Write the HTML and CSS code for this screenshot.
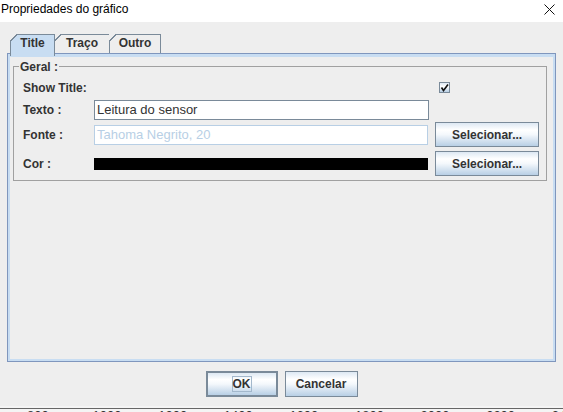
FILE: index.html
```html
<!DOCTYPE html>
<html>
<head>
<meta charset="utf-8">
<link rel="stylesheet" href="styles.css">
</head>
<body>
<div class="window">
  <div class="titlebar">
    <span class="title">Propriedades do gráfico</span>
    <svg class="close" width="11" height="11" viewBox="0 0 11 11"><path d="M0.5 0.5 L10.5 10.5 M10.5 0.5 L0.5 10.5" stroke="#111" stroke-width="1" fill="none"/></svg>
  </div>
  <div class="dialog">
    <div class="tabs">
      <div class="tab selected tab-title">Title</div>
      <div class="tab tab-traco">Traço</div>
      <div class="tab tab-outro">Outro</div>
    </div>
    <div class="panel">
      <div class="group">
        <span class="legend">Geral :</span>
        <div class="row r1">
          <span class="label">Show Title:</span>
          <span class="check"><svg width="9" height="9" viewBox="0 0 9 9"><path d="M1.5 4.5 L3.5 7.5 L8 1.5" stroke="#111" stroke-width="1.6" fill="none"/></svg></span>
        </div>
        <div class="row r2">
          <span class="label">Texto :</span>
          <span class="field">Leitura do sensor</span>
        </div>
        <div class="row r3">
          <span class="label">Fonte :</span>
          <span class="field disabled">Tahoma Negrito, 20</span>
          <span class="btn select">Selecionar...</span>
        </div>
        <div class="row r4">
          <span class="label">Cor :</span>
          <span class="swatch"></span>
          <span class="btn select">Selecionar...</span>
        </div>
      </div>
    </div>
    <div class="actions">
      <span class="btn default ok"><span class="focus">OK</span></span>
      <span class="btn cancel">Cancelar</span>
    </div>
  </div>
  <div class="behind">
    <span class="tick">800</span>
    <span class="tick">1000</span>
    <span class="tick">1200</span>
    <span class="tick">1400</span>
    <span class="tick">1600</span>
    <span class="tick">1800</span>
    <span class="tick">2000</span>
    <span class="tick">2200</span>
    <span class="tick">2400</span>
  </div>
</div>
</body>
</html>
```
FILE: styles.css
```css
* { box-sizing: border-box; }
html, body { margin: 0; padding: 0; }
body {
  width: 563px;
  height: 412px;
  overflow: hidden;
  font-family: "Liberation Sans", Arial, sans-serif;
  font-size: 12px;
  color: #333333;
  background: #eeeeee;
}
.window { width: 563px; height: 412px; display: flex; flex-direction: column; }

.titlebar {
  height: 22px;
  background: #ffffff;
  display: flex;
  justify-content: space-between;
  align-items: flex-start;
  padding: 0 8px 0 1px;
  flex: none;
}
.title { line-height: 18px; color: #000; font-size: 12px; }
.close { margin-top: 4px; }

.dialog {
  height: 384px;
  flex: none;
  background: #eeeeee;
  padding: 12px 0 0 7px;
  display: flex;
  flex-direction: column;
}

.tabs { display: flex; margin-left: 3px; height: 19px; }
.tab {
  position: relative;
  height: 19px;
  border: 1px solid #7a8a99;
  border-bottom: none;
  font-weight: bold;
  line-height: 16px;
  text-align: center;
  background: #eeeeee;
  padding-bottom: 2px;
}
.tab::before {
  content: "";
  position: absolute;
  left: -1px;
  top: -1px;
  width: 7px;
  height: 7px;
  background: linear-gradient(to bottom right, #eeeeee 0, #eeeeee 44%, #7a8a99 44%, #7a8a99 58%, transparent 58%);
}
.tab-title { width: 45px; }
.tab-traco { width: 56px; margin-left: -1px; }
.tab-outro { width: 52px; margin-left: -1px; }
.tab.selected {
  background: #c8ddf2;
  z-index: 2;
  height: 22px;
  margin-bottom: -3px;
}

.panel {
  width: 549px;
  height: 309px;
  border: 1px solid #7f96bd;
  box-shadow: inset 0 0 0 2px #c8ddf2, inset 0 3px 0 0 #c8ddf2;
  padding: 12px 0 0 5px;
  flex: none;
}

.group {
  position: relative;
  width: 534px;
  height: 115px;
  border: 1px solid #a0a0a0;
  padding: 11px 7px 4px 9px;
  display: flex;
  flex-direction: column;
}
.legend {
  position: absolute;
  left: 5px;
  top: -7px;
  padding: 0 1px;
  background: #eeeeee;
  line-height: 14px;
  font-weight: bold;
}

.row { display: flex; align-items: center; }
.label { width: 71px; flex: none; font-weight: bold; }
.r1 { height: 19px; }
.r2 { height: 22px; margin-top: 2px; }
.r3 { height: 25px; margin-top: 1px; }
.r4 { height: 25px; margin-top: 4px; }

.check {
  width: 11px;
  height: 11px;
  margin-left: 345px;
  border: 1px solid #7a8a99;
  background: linear-gradient(#dde8f3, #ffffff 40%, #b8cfe5);
  display: flex;
  align-items: flex-end;
  justify-content: center;
}
.check svg { display: block; }

.field {
  width: 335px;
  height: 20px;
  border: 1px solid #7a8a99;
  background: #ffffff;
  padding-left: 2px;
  line-height: 18px;
  color: #333333;
  font-size: 13px;
}
.field.disabled { border-color: #b8cfe5; color: #b8cfe5; margin-top: 1px; }
.swatch { width: 335px; height: 12px; background: #000000; }

.btn {
  display: inline-flex;
  align-items: center;
  justify-content: center;
  height: 25px;
  border: 1px solid #7a8a99;
  background: linear-gradient(#dde8f3 0%, #ffffff 30%, #f4f8fc 50%, #b8cfe5 100%);
  font-weight: bold;
  color: #333333;
}
.select { width: 104px; margin-left: 7px; }

.actions {
  display: flex;
  justify-content: center;
  gap: 7px;
  margin-top: 9px;
  margin-left: -7px;
}
.actions .btn { height: 26px; }
.ok { width: 72px; border: 2px solid #7a8a99; }
.cancel { width: 73px; }
.focus {
  border: 1px solid #a3b8cc;
  line-height: 14px;
  padding: 0;
}

.behind {
  height: 6px;
  flex: none;
  background: #f4f4f4;
  position: relative;
  display: flex;
  padding-left: 27px;
  overflow: hidden;
}
.behind::before {
  content: "";
  position: absolute;
  left: 0;
  right: 0;
  top: 2px;
  height: 1px;
  background: #666666;
}
.tick {
  width: 65.6px;
  flex: none;
  font-size: 13px;
  line-height: 13px;
  margin-top: 3px;
  color: #333333;
}
```
